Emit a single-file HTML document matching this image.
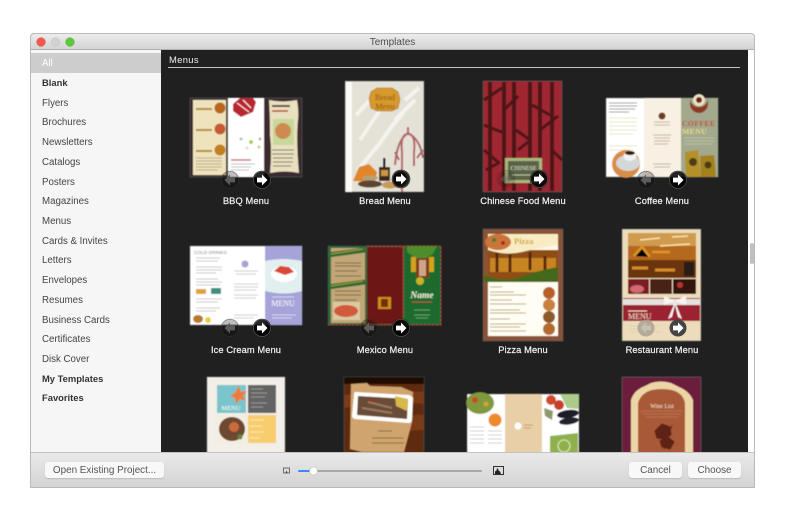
<!DOCTYPE html>
<html><head><meta charset="utf-8"><style>
html,body{margin:0;padding:0;background:#fff}
body{width:785px;height:520px;position:relative;overflow:hidden;font-family:"Liberation Sans",sans-serif}
div{position:absolute;box-sizing:border-box}
#win{left:30px;top:33px;width:725px;height:455px;border:1px solid #b9b9b9;border-radius:4px 4px 0 0;background:#fff;overflow:hidden}
#tb{left:30px;top:33px;width:725px;height:17px;background:linear-gradient(#ececec,#d4d4d4);border:1px solid #bdbdbd;border-bottom:1px solid #b0b0b0;border-radius:4px 4px 0 0;text-align:center;font-size:10px;line-height:17px;color:#4e4e4e}
#sb{left:31px;top:50px;width:130px;height:402px;background:#f6f6f6}
#sel{left:31px;top:53px;width:130px;height:20px;background:#cdcdcd}
.i{left:42px;font-size:9.7px;color:#444;line-height:12px;white-space:nowrap}
.b{font-weight:bold;color:#333;font-size:9.4px}
#dk{left:161px;top:50px;width:587px;height:402px;background:#202020}
#h{left:169px;top:54px;font-size:9.4px;color:#eee;letter-spacing:.35px;line-height:12px}
#ln{left:168px;top:67px;width:572px;height:1px;background:#c4c4c4}
.l{font-size:9.3px;color:#f2f2f2;line-height:12px;white-space:nowrap;transform:translateX(-50%);-webkit-text-stroke:.2px #f2f2f2;letter-spacing:.1px}
#ft{left:31px;top:452px;width:723px;height:35px;background:linear-gradient(#e9e9e9,#d4d4d4);border-top:1px solid #c2c2c2}
.btn{top:462px;height:16px;background:#f8f8f8;border-radius:3px;box-shadow:0 1px 1px #bbb;font-size:9.9px;color:#555;text-align:center;line-height:17px}
#sbar{left:750px;top:243px;width:4px;height:21px;background:#c0c0c0;border-radius:2px}
svg{position:absolute;left:0;top:0}
svg text{font-family:"Liberation Serif",serif}
</style></head><body>
<div id="win"></div>
<div id="tb">Templates</div>
<div id="sb"></div><div id="sel"></div>
<div class="i" style="top:58px;color:#fff">All</div>
<div class="i b" style="top:77px">Blank</div>
<div class="i" style="top:98px">Flyers</div>
<div class="i" style="top:117px">Brochures</div>
<div class="i" style="top:137px">Newsletters</div>
<div class="i" style="top:157px">Catalogs</div>
<div class="i" style="top:177px">Posters</div>
<div class="i" style="top:196px">Magazines</div>
<div class="i" style="top:216px">Menus</div>
<div class="i" style="top:236px">Cards &amp; Invites</div>
<div class="i" style="top:255px">Letters</div>
<div class="i" style="top:275px">Envelopes</div>
<div class="i" style="top:295px">Resumes</div>
<div class="i" style="top:315px">Business Cards</div>
<div class="i" style="top:334px">Certificates</div>
<div class="i" style="top:354px">Disk Cover</div>
<div class="i b" style="top:373px">My Templates</div>
<div class="i b" style="top:392px">Favorites</div>
<div id="dk"></div>
<div id="h">Menus</div><div id="ln"></div>
<div id="sbar"></div>

<svg width="785" height="520" viewBox="0 0 785 520">
<defs>
<filter id="s" x="-5%" y="-5%" width="110%" height="110%"><feGaussianBlur stdDeviation=".6"/></filter>
<g id="ar"><circle r="9.3" fill="#000" opacity=".85"/><circle r="8.6" fill="none" stroke="#555" stroke-width=".8"/><path d="M-5-2.400H0V-5.500L5.500 0 0 5.500V2.400H-5Z" fill="#fff"/></g>
<g id="al"><circle r="9.3" fill="#000" opacity=".25"/><circle r="8.600" fill="none" stroke="#444" stroke-width=".6" opacity=".6"/><path d="M5-2.400H0V-5.500L-5.500 0 0 5.500V2.400H5Z" fill="#5c5c5c"/></g>
</defs>
<!-- traffic lights -->
<circle cx="41" cy="42" r="4.300" fill="#f25a50" stroke="#d9473e" stroke-width=".5"/>
<circle cx="55.500" cy="42" r="4.300" fill="#d2d2d2" stroke="#c2c2c2" stroke-width=".5"/>
<circle cx="70" cy="42" r="4.300" fill="#5ec83c" stroke="#4bb02c" stroke-width=".5"/>
<g filter="url(#s)">
<!-- BBQ -->
<rect x="190" y="98" width="112" height="79" fill="#3a2b2e" stroke="#555" stroke-width=".7"/>
<rect x="193" y="100" width="33" height="75" fill="#efe3bd"/>
<path d="M196 109h16M196 130h16M196 151h16" stroke="#b58a35" stroke-width="2"/>
<circle cx="220" cy="108" r="5.500" fill="#b8681f"/><circle cx="220" cy="129" r="5.500" fill="#c65a30"/><circle cx="220" cy="150" r="5.500" fill="#c47e1e"/>
<path d="M196 158h26M196 161h26M196 164h26M196 167h26M196 170h22" stroke="#b9a98a" stroke-width="1"/>
<rect x="228" y="98" width="36" height="79" fill="#fff"/>
<path d="M233 104l7-6h13l3 4-3 10-12 5-8-6Z" fill="#b9252f"/><path d="M237 103l12 9M243 100l8 8" stroke="#fff" stroke-width="1"/>
<circle cx="251" cy="142" r="2" fill="#a5cf5a"/><circle cx="260" cy="139" r="1.500" fill="#c9a7a7"/><circle cx="241" cy="139" r="1.500" fill="#bbb"/><circle cx="247" cy="148" r="1.500" fill="#ddb"/><circle cx="259" cy="147" r="1.500" fill="#cc9"/>
<path d="M231 160h20" stroke="#c8434a" stroke-width="1.300"/><path d="M231 164h24M231 167h20M231 170h18" stroke="#aaa" stroke-width=".8"/>
<path d="M269 100q14 3 28 0 2 12 1 20-2 20 1 53-14-3-29 0 2-20 0-38 0-20-1-35Z" fill="#e9e0bf"/>
<path d="M272 106h18" stroke="#5a4a3a" stroke-width="2"/><path d="M272 111h16" stroke="#b5332c" stroke-width="1.400"/>
<rect x="273" y="119" width="21" height="26" fill="#c8d79c"/><circle cx="283" cy="131" r="8" fill="#cf8a50"/>
<path d="M272 150h22M272 154h22M273 158h20M273 162h20M273 166h18" stroke="#7c7565" stroke-width=".9"/>
<!-- Bread -->
<rect x="345" y="81" width="79" height="111" fill="#e9e6dd" stroke="#555" stroke-width=".7"/>
<path d="M352 82h71v109h-71z" fill="#e4e1d7"/><rect x="346" y="82" width="6" height="110" fill="#fbfaf6"/>
<path d="M360 140l20-30M375 150l25-35M395 120l20-20M358 170l20-25M356 115l14-15M385 135l18-22M405 100l14-12" stroke="#f4f3ee" stroke-width="4"/>
<path d="M371 92l6-4h15l6 4 2 7-2 9-6 3h-15l-6-3-2-9Z" fill="#d79a2c" stroke="#a96a1a" stroke-width=".6"/>
<text x="385" y="100" font-size="8.400" text-anchor="middle" fill="#8a4e1a">Bread</text>
<text x="385" y="109" font-size="8.400" text-anchor="middle" fill="#8a4e1a">Menu</text>
<path d="M402 192V152q-2-18 6-18t6 18v14M395 165q2-25 13-32 12 6 15 25M399 160l-4-8M417 158l6-8M408 133v-6" stroke="#a23a42" stroke-width="2" fill="none" opacity=".75"/>
<path d="M353 181l6-14 10-3 8 8-2 10Z" fill="#e0872a"/>
<rect x="379" y="167" width="11" height="14" fill="#3c2a1c"/><rect x="381" y="170" width="7" height="6" fill="#c8963c"/><rect x="383" y="158" width="2.500" height="9" fill="#222"/>
<ellipse cx="370" cy="184" rx="12" ry="3.500" fill="#5b4530"/><ellipse cx="390" cy="185" rx="8" ry="3.500" fill="#c79a55"/><ellipse cx="370" cy="178" rx="8" ry="2.500" fill="#b89f74"/>
<circle cx="400" cy="179" r="7" fill="#4c2418"/>
<!-- Chinese -->
<rect x="483" y="81" width="79" height="111" fill="#9f2530" stroke="#555" stroke-width=".7"/>
<path d="M490 82v109M504 82v109M514 82v109M530 82v109M540 82v109M552 82v109" stroke="#4e1219" stroke-width="4"/>
<path d="M484 100l18-12M484 125l20 8M504 110l14-14M516 130l14 10M532 105l18 10M540 130l18-14M484 150l14 12M552 150l10 10M486 170l14-8M518 150l10-8" stroke="#4e1219" stroke-width="3"/>
<rect x="505" y="158" width="37" height="25" fill="#a9b77a"/><rect x="508" y="161" width="31" height="19" fill="#5a6448"/>
<text x="523.500" y="170" font-size="6.200" text-anchor="middle" fill="#dfe6c6">CHINESE</text>
<path d="M512 175h23" stroke="#bbc59a" stroke-width="1"/>
<!-- Coffee -->
<rect x="606" y="98" width="112" height="79" fill="#fff" stroke="#666" stroke-width=".6"/>
<rect x="644" y="98" width="37" height="79" fill="#f8f0e3"/>
<rect x="681" y="98" width="37" height="79" fill="#a2a98c"/>
<path d="M609 103h28M609 106h28M609 109h26M609 112h20" stroke="#9a9a9a" stroke-width=".9"/>
<path d="M609 118h28M609 122h28M609 126h28M609 130h28M609 134h24M609 146h28M609 150h24" stroke="#e6e8c6" stroke-width="1"/>
<circle cx="626" cy="164" r="14" fill="#d98c44"/><ellipse cx="628" cy="163" rx="12" ry="8" fill="#d4d7d8"/><ellipse cx="630" cy="156" rx="6.500" ry="5" fill="#f3f3f3"/><ellipse cx="630" cy="153" rx="5" ry="2" fill="#2d1c12"/>
<circle cx="662" cy="116" r="3.500" fill="#6d3a22"/>
<path d="M654 122h16M654 125h16M653 135h18M654 138h16M654 141h16M654 144h14M653 164h18M654 167h16" stroke="#c3b39d" stroke-width=".9"/>
<path d="M690 98a9 9 0 0 0 18 0v6a9 9 0 0 1-18 0Z" fill="#8e3a26"/><circle cx="699" cy="100" r="6" fill="#f0e2c5"/><circle cx="699" cy="100" r="3" fill="#6d2b1a"/>
<text x="682" y="126" font-size="7.800" font-weight="bold" fill="#c4462a" letter-spacing=".3">COFFEE</text>
<text x="682" y="134" font-size="7.800" font-weight="bold" fill="#e8dc8b" letter-spacing=".3">MENU</text>
<path d="M684 138h30M684 141h30M684 144h28" stroke="#c6c9ac" stroke-width=".8"/>
<path d="M686 177l-1-25 13-2 3 27Z" fill="#b49027"/><path d="M701 177l-1-21 14-1 2 22Z" fill="#a3821f"/><circle cx="693" cy="162" r="4" fill="#4d3c17"/><circle cx="708" cy="165" r="3.500" fill="#4d3c17"/>
<!-- Ice cream -->
<rect x="190" y="246" width="112" height="79" fill="#fff" stroke="#777" stroke-width=".6"/>
<rect x="265" y="246" width="37" height="79" fill="#a5a3d8"/>
<path d="M265 261q18-4 37 0v30q-18 5-37 0Z" fill="#e1eff0"/>
<ellipse cx="284" cy="274" rx="13" ry="8" fill="#fff"/><path d="M274 271l6-5 9 1 5 5-9 3Z" fill="#d64a3a"/>
<text x="283" y="306" font-size="8" text-anchor="middle" fill="#fff">MENU</text>
<path d="M272 297h22M272 315h24M272 318h20" stroke="#d7d6f0" stroke-width=".9"/>
<text x="194" y="254" font-size="4.800" fill="#777" style="font-family:'Liberation Sans'">COLD DRINKS</text>
<path d="M196 258h24M196 261h22M196 267h26M196 270h26M196 273h20M196 279h22M196 282h26M196 285h24M196 299h26M196 302h22M196 308h24M196 311h20" stroke="#c8c8c8" stroke-width=".9"/>
<rect x="196" y="289" width="10" height="5" fill="#e0a23a"/><rect x="211" y="288" width="10" height="6" fill="#3f8e80"/>
<circle cx="245" cy="264" r="3.500" fill="#a5a3d8"/>
<path d="M234 271h24M236 274h20M234 284h24M234 287h24M234 290h22M234 295h24M234 298h22M234 315h24M234 318h20" stroke="#cfcfcf" stroke-width=".9"/>
<ellipse cx="198" cy="319" rx="5" ry="4" fill="#b77a2a"/><circle cx="208" cy="320" r="3" fill="#e5cf3c"/>
<!-- Mexico -->
<rect x="328" y="246" width="113" height="79" fill="#2f6a3a" stroke="#444" stroke-width=".6"/>
<rect x="331" y="248" width="34" height="75" fill="#c2a677"/>
<rect x="367" y="247" width="36" height="77" fill="#6d1518"/>
<rect x="405" y="247" width="35" height="77" fill="#1f6b2e"/>
<path d="M328 255l37-5M328 287l37-5" stroke="#2f6a3a" stroke-width="5"/>
<path d="M331 254l32-5M331 286l32-5" stroke="#a09a20" stroke-width="1.300"/>
<path d="M335 263h26M335 266h26M335 271h22M335 276h26M335 291h26M335 295h26M335 300h22" stroke="#7a6a4f" stroke-width=".9"/>
<rect x="333" y="302" width="27" height="18" fill="#d9c9a2"/><ellipse cx="346" cy="311" rx="12" ry="6" fill="#d25a3a"/>
<rect x="378" y="297" width="13" height="12" fill="#c8901c"/><rect x="381" y="299" width="7" height="8" fill="#7a2a10"/>
<path d="M367 246l37 0 36 0M403 247v77M441 247v78M328 325h113" stroke="#c72f2f" stroke-width="1.200" stroke-dasharray="2 2"/>
<path d="M407 246h30l-4 8-10 6-9-3-7-5Z" fill="#4e8d2c"/>
<rect x="411" y="257" width="5" height="15" fill="#d6a21f"/><rect x="429" y="257" width="5" height="15" fill="#d6a21f"/><rect x="416" y="258" width="13" height="20" fill="#7e3a1c"/><rect x="419" y="260" width="7" height="16" fill="#cfa58a"/>
<circle cx="420" cy="281" r="4" fill="#c7b32a"/>
<text x="422" y="298" font-size="9.500" font-style="italic" font-weight="bold" text-anchor="middle" fill="#f2f0d8">Name</text>
<path d="M412 302h20" stroke="#c7423a" stroke-width="1"/><path d="M414 310h16M414 315h16M416 318h12" stroke="#7fb07f" stroke-width=".8"/>
<!-- Pizza -->
<rect x="483" y="229" width="80" height="112" fill="#8b5236" stroke="#555" stroke-width=".7"/>
<rect x="488" y="234" width="70" height="102" fill="#fdf8e8"/>
<rect x="488" y="250" width="70" height="30" fill="#8f4e15"/>
<rect x="490" y="258" width="66" height="14" fill="#c88324"/><path d="M497 252v20M510 254v18M530 252v18M545 256v16" stroke="#5a2c0e" stroke-width="3"/>
<path d="M484 275q20 8 36 2t38-10v15h-74Z" fill="#44691f"/>
<path d="M488 234h70v11q-20 3-36 7t-34-2Z" fill="#f7ecc4"/>
<ellipse cx="498" cy="242" rx="13" ry="8" fill="#c9743a"/><circle cx="494" cy="240" r="2" fill="#4a7b2a"/><circle cx="503" cy="243" r="2" fill="#b5281f"/>
<text x="514" y="244" font-size="8.500" fill="#d8a22c" font-weight="bold">Pizza</text>
<rect x="488" y="283" width="70" height="53" fill="#fffdf4"/>
<circle cx="549" cy="293" r="6" fill="#b8602a"/><circle cx="549" cy="305" r="6" fill="#c8803a"/><circle cx="549" cy="317" r="6" fill="#8e5a2a"/><circle cx="549" cy="329" r="6" fill="#b36a2e"/>
<path d="M490 287h12M490 292h24M490 295h36M490 300h22M490 304h36M490 310h30M490 313h36M490 319h20M490 324h36M490 327h30M490 331h36" stroke="#bdaa76" stroke-width=".9"/>
<!-- Restaurant -->
<rect x="622" y="229" width="79" height="112" fill="#ecdcbc" stroke="#555" stroke-width=".7"/>
<rect x="628" y="233" width="68" height="45" fill="#b5691f"/>
<path d="M628 233h68v13h-68z" fill="#d09a50"/><path d="M640 240l20-2M660 246l30-2M672 237l16-1" stroke="#f7e3a8" stroke-width="1.500"/>
<path d="M628 260h68v18h-68z" fill="#6b3410"/><path d="M634 256l8-9 8 10M652 252h18" stroke="#e09428" stroke-width="2.500"/><rect x="684" y="262" width="10" height="14" fill="#2b1a12"/><path d="M632 268h16M655 270h20" stroke="#d58a2a" stroke-width="3"/>
<rect x="628" y="279" width="21" height="15" fill="#7a1d22"/><rect x="650" y="279" width="22" height="15" fill="#4a2413"/><rect x="673" y="279" width="23" height="15" fill="#33180e"/>
<ellipse cx="637" cy="289" rx="7" ry="4" fill="#cf6a6f"/><circle cx="680" cy="285" r="3" fill="#b33"/>
<rect x="623" y="298" width="77" height="23" fill="#9c2230"/>
<rect x="623" y="299" width="77" height="6" fill="#e5e1dc"/>
<text x="628" y="319" font-size="8" fill="#f3e9d0">MENU</text>
<path d="M628 311h19" stroke="#ecdcc0" stroke-width="1"/>
<path d="M675 301l-11-5v9ZM675 301l11-5v9ZM675 302l-7 17 4-2 3-12 3 12 4 2-7-17Z" fill="#f6f4f0"/>
<path d="M630 326h30M630 329h26M630 332h32" stroke="#d9c7a4" stroke-width=".8"/>
<!-- Row 3 -->
<rect x="207" y="377" width="78" height="80" fill="#f2eee8" stroke="#888" stroke-width=".6"/>
<rect x="217" y="385" width="29" height="28" fill="#7cc4cc"/>
<path d="M239 386l2 6 6-1-4 5 3 5-6-2-4 5-1-6-5-2 5-3Z" fill="#ef7a3a"/>
<text x="231" y="410" font-size="6.500" text-anchor="middle" fill="#fff">MENU</text>
<rect x="248" y="385" width="28" height="28" fill="#636363"/>
<path d="M251 389h12M251 393h16M251 397h14M251 403h16M251 407h12" stroke="#aaa" stroke-width=".8"/>
<rect x="217" y="415" width="29" height="28" fill="#f4ede0"/><ellipse cx="232" cy="429" rx="13" ry="12" fill="#6d4a30"/><circle cx="234" cy="427" r="5" fill="#cc6b3a"/><circle cx="240" cy="437" r="2.500" fill="#5c8c3c"/>
<rect x="248" y="415" width="28" height="28" fill="#f7cd6d"/>
<path d="M250 420h14M250 426h12M250 432h14M250 438h10" stroke="#fff2c8" stroke-width=".8"/>
<rect x="344" y="377" width="80" height="80" fill="#5e2b10" stroke="#555" stroke-width=".6"/>
<rect x="344" y="377" width="80" height="7" fill="#1e0e06"/>
<path d="M344 395q40-6 80-3v12q-40-4-80 4ZM400 418q12-4 24-3v15q-14 0-24 4Z" fill="#7a3a14"/>
<path d="M351 384l16-1 3 3 31 1 12 5-1 30-8 30h-42l-12-3Z" fill="#d0a46e"/>
<path d="M355 392l54 3q3 1 4 3l-1 22q-1 3-3 3l-54-4q-3-1-3-3l2-21q0-3 1-3Z" fill="#fff"/>
<path d="M358 396l50 3-1 20-50-4Z" fill="#6b4c38"/><path d="M395 396l13 3-1 12-11-5Z" fill="#d8b84a"/><circle cx="372" cy="401" r="2" fill="#a32c22"/><path d="M362 408l30 5M368 402l24 6" stroke="#9a7a60" stroke-width="2"/>
<path d="M378 431h14M372 438h32M372 443h32" stroke="#8a6a42" stroke-width="1"/>
<rect x="467" y="394" width="112" height="63" fill="#fff" stroke="#555" stroke-width=".5"/>
<rect x="505" y="394" width="37" height="63" fill="#e9cfa8"/>
<ellipse cx="480" cy="403" rx="14" ry="11" fill="#7f9a3c"/><circle cx="475" cy="400" r="3" fill="#cc4a28"/><circle cx="486" cy="404" r="2.500" fill="#d8a03a"/>
<circle cx="495" cy="420" r="6.500" fill="#ee8a2c"/>
<path d="M470 427h14M470 431h14M470 435h14M470 439h14M470 443h14M488 431h14M488 435h14M488 439h14M488 443h14" stroke="#cfcfcf" stroke-width="1"/>
<circle cx="518" cy="426" r="3.500" fill="#fff"/><path d="M524 425h9M524 428h7" stroke="#c89f4c" stroke-width="1"/>
<circle cx="551" cy="400" r="5" fill="#d0482a"/><circle cx="559" cy="405" r="5" fill="#c8402a"/><path d="M560 394h19v15l-12-1Z" fill="#abcb8a"/>
<path d="M544 408l9 3-1 9-7-4Z" fill="#8e9a6e"/><ellipse cx="568" cy="414" rx="11" ry="4" fill="#1c1c2a" transform="rotate(-8 568 414)"/><ellipse cx="569" cy="421" rx="10" ry="3.500" fill="#22222e" transform="rotate(-8 569 421)"/>
<path d="M550 436l28-3v24h-28Z" fill="#8fb14c"/><circle cx="564" cy="446" r="6" fill="none" stroke="#e2ecc4" stroke-width="1"/>
<rect x="622" y="377" width="79" height="80" fill="#6c1a3c" stroke="#666" stroke-width=".6"/>
<path d="M631 400q3-10 14-14l6-3q10-3 20 0l8 4q10 4 14 13v57h-62Z" fill="#edd6a6"/>
<path d="M638 403q3-10 14-13 10-2 20 0 11 3 13 13v54h-47Z" fill="#a85a38"/>
<text x="662" y="408" font-size="6" text-anchor="middle" fill="#f4e8d4">Wine List</text>
<path d="M641 411h42M643 414h38M646 417h32" stroke="#c78a6a" stroke-width=".6"/>
<path d="M655 431l7-7 8 3 1 8-7 4-7-1ZM660 441l8-4 6 5-4 7-8-2ZM672 425l-8 24" fill="#5e2112" stroke="#5e2112" stroke-width="1"/>
</g>
<!-- arrows -->
<use href="#al" x="230" y="180"/><use href="#ar" x="262" y="180"/>
<use href="#ar" x="401" y="179"/>
<use href="#al" x="506" y="179" opacity=".5"/><use href="#ar" x="539" y="179"/>
<use href="#al" x="646" y="180"/><use href="#ar" x="678" y="180"/>
<use href="#al" x="230" y="328"/><use href="#ar" x="262" y="328"/>
<use href="#al" x="369" y="328"/><use href="#ar" x="401" y="328"/>
<g transform="translate(646 328)"><circle r="8.500" fill="#a79f90" opacity=".8"/><path d="M5-2.400H0V-5.500L-5.500 0 0 5.500V2.400H5Z" fill="#c8c0b0"/></g>
<g transform="translate(678 328)"><circle r="8.500" fill="#444"/><path d="M-5-2.400H0V-5.500L5.500 0 0 5.500V2.400H-5Z" fill="#fff"/></g>
</svg>

<div class="l" style="left:246px;top:195px">BBQ Menu</div>
<div class="l" style="left:385px;top:195px">Bread Menu</div>
<div class="l" style="left:523px;top:195px">Chinese Food Menu</div>
<div class="l" style="left:662px;top:195px">Coffee Menu</div>
<div class="l" style="left:246px;top:344px">Ice Cream Menu</div>
<div class="l" style="left:385px;top:344px">Mexico Menu</div>
<div class="l" style="left:523px;top:344px">Pizza Menu</div>
<div class="l" style="left:662px;top:344px">Restaurant Menu</div>

<div id="ft"></div>
<div class="btn" style="left:45px;width:119px">Open Existing Project...</div>
<div class="btn" style="left:629px;width:53px">Cancel</div>
<div class="btn" style="left:688px;width:53px">Choose</div>
<svg width="785" height="520" viewBox="0 0 785 520">
<rect x="283.500" y="468" width="6" height="5" fill="#ddd" stroke="#555" stroke-width=".8"/>
<path d="M285.500 473l1-2.500 1 2.500" fill="#333"/>
<rect x="308" y="470" width="174" height="2" fill="#a8a8a8" rx="1"/>
<rect x="298" y="470" width="12" height="2" fill="#3b8cf0" rx="1"/>
<circle cx="313.500" cy="471" r="4" fill="#fdfdfd" stroke="#bbb" stroke-width=".6"/>
<rect x="493.500" y="466.500" width="10" height="8" fill="#ddd" stroke="#333" stroke-width="1"/>
<path d="M495 474v-2.500l1.500-1 .5-2h1l.5 2 1.500 1 1 2.500Z" fill="#222"/>
</svg>
</body></html>
